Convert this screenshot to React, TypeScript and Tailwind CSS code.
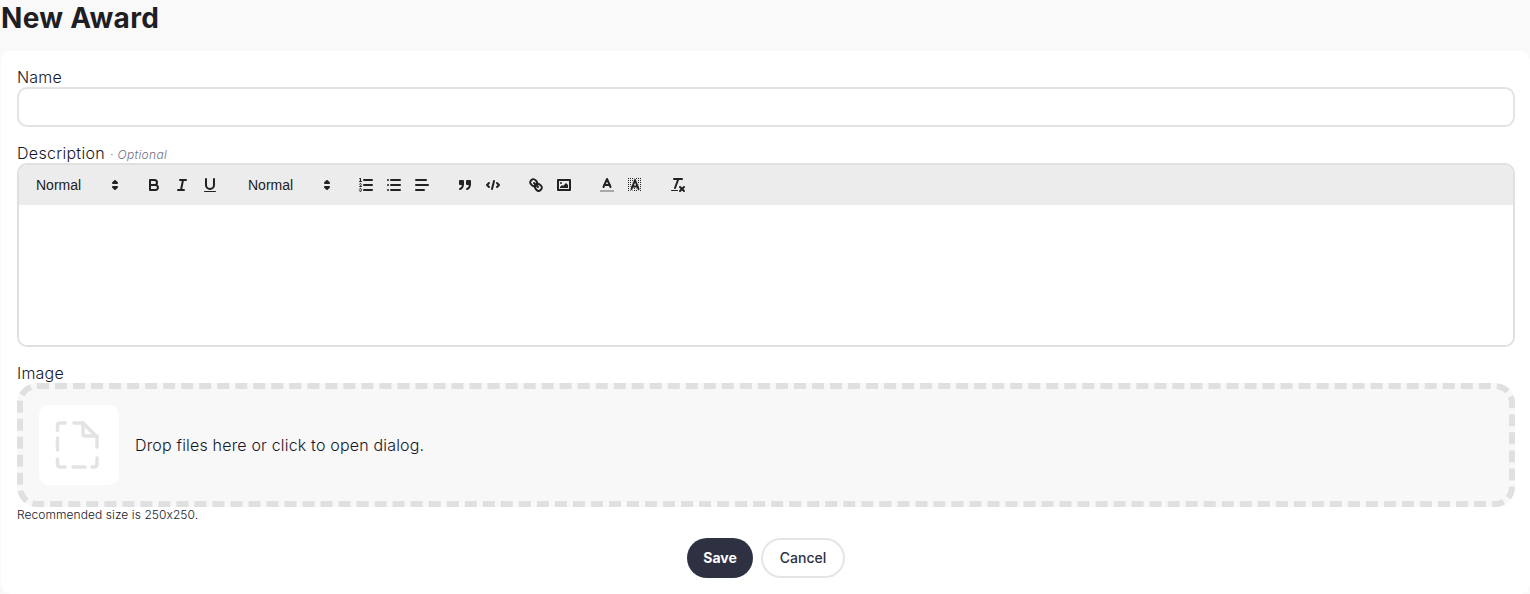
import React from "react";

const S = ({ children }: { children: React.ReactNode }) => (
  <svg viewBox="0 0 18 18" className="h-[18px] w-[18px]" fill="none" stroke="#222" strokeWidth={2} strokeLinecap="round" strokeLinejoin="round">
    {children}
  </svg>
);

const Btn = ({ children }: { children: React.ReactNode }) => (
  <span className="flex h-6 w-7 items-center justify-center">{children}</span>
);

const Picker = ({ className = "" }: { className?: string }) => (
  <span className={`flex h-6 w-[98px] items-center justify-between pl-2 pr-[2px] font-['Liberation_Sans',sans-serif] text-sm tracking-normal text-[#222] ${className}`}>
    <span>Normal</span>
    <svg viewBox="0 0 18 18" className="h-[18px] w-[18px]" fill="#222" stroke="#222" strokeWidth={2} strokeLinejoin="round">
      <polygon points="7 11 9 13 11 11 7 11" />
      <polygon points="7 7 9 5 11 7 7 7" />
    </svg>
  </span>
);

const Group = ({ children, className = "" }: { children: React.ReactNode; className?: string }) => (
  <span className={`flex items-center ${className}`}>{children}</span>
);

export default function App() {
  return (
    <div className="flex h-[594px] flex-col overflow-hidden bg-[#f9f9f9] font-['Inter',sans-serif] text-[#15172a] [font-feature-settings:'calt'_0]">
      <h1 className="h-[51px] shrink-0 pl-[1px] text-[28px] font-bold leading-[37px] tracking-[0.3px] text-[#1e1e24]">New Award</h1>
      <main className="ml-[1px] flex flex-1 flex-col rounded-[10px] bg-white pl-4 pr-[15px] pt-[16px]">
        <label className="block h-5 text-base font-light leading-5 tracking-[0.2px]">Name</label>
        <div className="h-10 rounded-[10px] border-2 border-[#e3e3e3] bg-white" />

        <div className="mt-4 flex h-5 items-baseline text-base font-light leading-5 tracking-[0.3px]">
          <span>Description</span>
          <span className="ml-[5px] text-xs italic tracking-[0.35px] text-[#6f6f85]">· Optional</span>
        </div>
        <div className="flex h-[184px] flex-col overflow-hidden rounded-[10px] border-2 border-[#e0e0e0]">
          <div className="flex h-10 items-center bg-[#ececec] pl-[9px]">
            <Picker />
            <Group className="ml-[14px]">
              <Btn>
                <S>
                  <path d="M5,4H9.5A2.5,2.5,0,0,1,12,6.5v0A2.5,2.5,0,0,1,9.5,9H5A0,0,0,0,1,5,9V4A0,0,0,0,1,5,4Z" />
                  <path d="M5,9h5.5A2.5,2.5,0,0,1,13,11.5v0A2.5,2.5,0,0,1,10.5,14H5a0,0,0,0,1,0,0V9A0,0,0,0,1,5,9Z" />
                </S>
              </Btn>
              <Btn>
                <S>
                  <line x1="7" x2="13" y1="4" y2="4" />
                  <line x1="5" x2="11" y1="14" y2="14" />
                  <line x1="8" x2="10" y1="14" y2="4" />
                </S>
              </Btn>
              <Btn>
                <S>
                  <path d="M5,3V9a4.012,4.012,0,0,0,4,4H9a4.012,4.012,0,0,0,4-4V3" />
                  <rect x="3" y="15" width="12" height="1" rx=".5" fill="#222" stroke="none" />
                </S>
              </Btn>
            </Group>
            <Picker className="ml-4" />
            <Group className="ml-[14px]">
              <Btn>
                <S>
                  <line x1="7" x2="15" y1="4" y2="4" />
                  <line x1="7" x2="15" y1="9" y2="9" />
                  <line x1="7" x2="15" y1="14" y2="14" />
                  <line x1="2.5" x2="4.5" y1="5.5" y2="5.5" strokeWidth={1} />
                  <path stroke="none" fill="#222" d="M3.5,6A0.5,0.5,0,0,1,3,5.5V3.085l-0.276.138A0.5,0.5,0,0,1,2.053,3c-0.124-.247-0.023-0.324.224-0.447l1-.5A0.5,0.5,0,0,1,4,2.5v3A0.5,0.5,0,0,1,3.5,6Z" />
                  <path strokeWidth={1} d="M4.5,10.5h-2c0-.234,1.85-1.076,1.85-2.234A0.959,0.959,0,0,0,2.5,8.156" />
                  <path strokeWidth={1} d="M2.5,14.846a0.959,0.959,0,0,0,1.85-.109A0.7,0.7,0,0,0,3.75,14a0.688,0.688,0,0,0,.6-0.736,0.959,0.959,0,0,0-1.85-.109" />
                </S>
              </Btn>
              <Btn>
                <S>
                  <line x1="6" x2="15" y1="4" y2="4" />
                  <line x1="6" x2="15" y1="9" y2="9" />
                  <line x1="6" x2="15" y1="14" y2="14" />
                  <line x1="3" x2="3" y1="4" y2="4" />
                  <line x1="3" x2="3" y1="9" y2="9" />
                  <line x1="3" x2="3" y1="14" y2="14" />
                </S>
              </Btn>
              <Btn>
                <S>
                  <line x1="3" x2="13" y1="4" y2="4" />
                  <line x1="3" x2="15" y1="9" y2="9" />
                  <line x1="3" x2="11" y1="14" y2="14" />
                </S>
              </Btn>
            </Group>
            <Group className="ml-[15px]">
              <Btn>
                <S>
                  <rect x="4" y="5" width="3" height="3" fill="#222" />
                  <rect x="11" y="5" width="3" height="3" fill="#222" />
                  <path d="M7,8c0,4.031-3,5-3,5" />
                  <path d="M14,8c0,4.031-3,5-3,5" />
                </S>
              </Btn>
              <Btn>
                <S>
                  <polyline points="5 7 3 9 5 11" />
                  <polyline points="13 7 15 9 13 11" />
                  <line x1="10" x2="8" y1="5" y2="13" />
                </S>
              </Btn>
            </Group>
            <Group className="ml-[15px]">
              <Btn>
                <S>
                  <line x1="7" x2="11" y1="7" y2="11" />
                  <path d="M8.9,4.577a3.476,3.476,0,0,1,.36,4.679A3.476,3.476,0,0,1,4.577,8.9C3.185,7.5,2.035,6.4,4.217,4.217S7.5,3.185,8.9,4.577Z" />
                  <path d="M13.423,9.1a3.476,3.476,0,0,0-4.679-.36,3.476,3.476,0,0,0,.36,4.679c1.392,1.392,2.5,2.542,4.679.36S14.815,10.5,13.423,9.1Z" />
                </S>
              </Btn>
              <Btn>
                <S>
                  <rect x="3" y="4" width="12" height="10" />
                  <circle cx="6" cy="7" r="1" fill="#222" stroke="none" />
                  <polyline points="5 12 5 11 7 9 8 10 11 7 13 9 13 12 5 12" fill="#222" stroke="none" />
                </S>
              </Btn>
            </Group>
            <Group className="ml-[15px]">
              <Btn>
                <S>
                  <line x1="3" x2="15" y1="15" y2="15" stroke="#a8a8a8" strokeLinecap="square" />
                  <polyline points="5.5 11 9 3 12.5 11" />
                  <line x1="11.63" x2="6.38" y1="9" y2="9" />
                </S>
              </Btn>
              <Btn>
                <S>
                  <defs>
                    <pattern id="hatch" width="2" height="2" patternUnits="userSpaceOnUse">
                      <rect width="1" height="1" fill="#222" stroke="none" />
                      <rect x="1" y="1" width="1" height="1" fill="#ececec" stroke="none" />
                    </pattern>
                  </defs>
                  <rect x="2" y="2" width="14" height="14" fill="url(#hatch)" stroke="none" />
                  <polyline points="5.5 13 9 4 12.5 13" stroke="#ececec" strokeWidth={3.5} />
                  <polyline points="5.5 13 9 4 12.5 13" />
                  <line x1="11.63" x2="6.38" y1="10.5" y2="10.5" />
                </S>
              </Btn>
            </Group>
            <Group className="ml-[15px]">
              <Btn>
                <S>
                  <line x1="5" x2="13" y1="3" y2="3" />
                  <line x1="6" x2="9.35" y1="12" y2="3" />
                  <line x1="11" x2="15" y1="11" y2="15" />
                  <line x1="15" x2="11" y1="11" y2="15" />
                  <rect x="2" y="14" width="7" height="1" rx=".5" fill="#222" stroke="none" />
                </S>
              </Btn>
            </Group>
          </div>
          <div className="flex-1 bg-white" />
        </div>

        <label className="mt-4 block h-5 text-base font-light leading-5 tracking-[0.2px]">Image</label>
        <div className="flex h-[124px] items-center rounded-[20px] border-[6px] border-dashed border-[#e0e0e0] bg-[#f8f8f8] pl-4">
          <div className="flex h-20 w-20 shrink-0 items-center justify-center rounded-[10px] bg-white">
            <svg viewBox="0 0 48 48" className="h-12 w-12" fill="none" stroke="#e3e3e3" strokeWidth={3.5} strokeLinecap="round" strokeLinejoin="round">
              <path d="M2.5 9.5V4.5Q2.5 2 5 2H10" />
              <path d="M19 2H28L42 16V26" />
              <path d="M28 2V13Q28 15 30 15H42" />
              <path d="M2.5 17V29" />
              <path d="M2.5 38V43Q2.5 46 5.5 46H10" />
              <path d="M18 46H30" />
              <path d="M37 46H39Q42 46 42 43V37" />
            </svg>
          </div>
          <span className="ml-4 text-base font-light tracking-[0.18px]">Drop files here or click to open dialog.</span>
        </div>
        <p className="h-4 text-xs font-light leading-4 tracking-[0.07px]">Recommended size is 250x250.</p>

        <div className="mt-[15px] flex justify-center gap-2">
          <button className="h-10 w-[66px] rounded-full bg-[#2d3142] text-sm font-bold text-white">Save</button>
          <button className="h-10 w-[84px] rounded-full border-2 border-[#e5e5e5] bg-white text-sm font-medium text-[#2d3142]">Cancel</button>
        </div>
      </main>
    </div>
  );
}
